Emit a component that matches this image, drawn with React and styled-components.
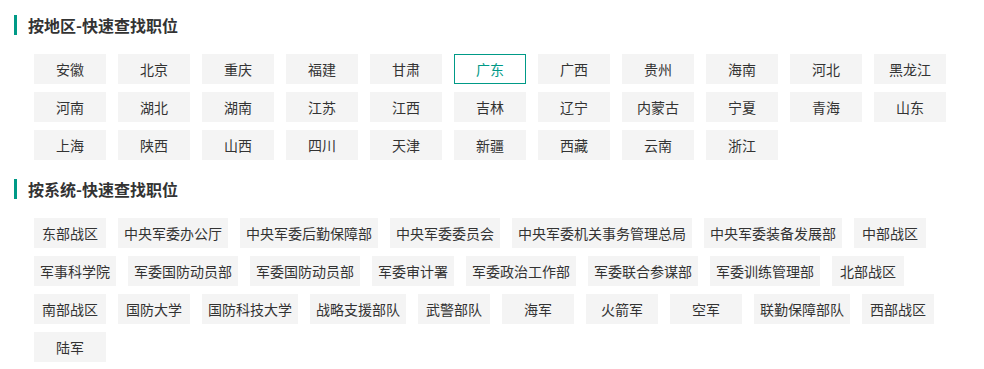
import styled, { createGlobalStyle } from "styled-components";

const GlobalStyle = createGlobalStyle`
  body {
    margin: 0;
    background: #fff;
    font-family: "Microsoft YaHei", "Noto Sans CJK SC", sans-serif;
    color: #333;
  }
`;

const Page = styled.div`
  padding: 15px 0 0 14px;
  width: 970px;
`;

const Heading = styled.h3`
  margin: ${(p) => (p.$first ? "0" : "11px")} 0 19px;
  border-left: 3px solid #009a87;
  padding-left: 11px;
  height: 20px;
  line-height: 20px;
  font-size: 16px;
  font-weight: bold;
  color: #333;
`;

const List = styled.ul`
  list-style: none;
  margin: 0;
  padding: 0 0 0 20px;
  display: flex;
  flex-wrap: wrap;
`;

const Item = styled.li`
  box-sizing: border-box;
  min-width: 72px;
  height: 30px;
  margin: 0 12px 8px 0;
  padding: 0 5px;
  font-size: 14px;
  line-height: 28px;
  text-align: center;
  white-space: nowrap;
  background: ${(p) => (p.$active ? "#fff" : "#f4f4f4")};
  border: 1px solid ${(p) => (p.$active ? "#009a87" : "transparent")};
  color: ${(p) => (p.$active ? "#009a87" : "#333")};
  cursor: pointer;
`;

const regions = [
  "安徽", "北京", "重庆", "福建", "甘肃", "广东", "广西", "贵州", "海南", "河北", "黑龙江",
  "河南", "湖北", "湖南", "江苏", "江西", "吉林", "辽宁", "内蒙古", "宁夏", "青海", "山东",
  "上海", "陕西", "山西", "四川", "天津", "新疆", "西藏", "云南", "浙江",
];

const systems = [
  "东部战区", "中央军委办公厅", "中央军委后勤保障部", "中央军委委员会", "中央军委机关事务管理总局",
  "中央军委装备发展部", "中部战区", "军事科学院", "军委国防动员部", "军委国防动员部", "军委审计署",
  "军委政治工作部", "军委联合参谋部", "军委训练管理部", "北部战区", "南部战区", "国防大学",
  "国防科技大学", "战略支援部队", "武警部队", "海军", "火箭军", "空军", "联勤保障部队", "西部战区", "陆军",
];

export default function App() {
  return (
    <>
      <GlobalStyle />
      <Page>
        <Heading $first>按地区-快速查找职位</Heading>
        <List>
          {regions.map((name) => (
            <Item key={name} $active={name === "广东"}>
              {name}
            </Item>
          ))}
        </List>
        <Heading>按系统-快速查找职位</Heading>
        <List>
          {systems.map((name, i) => (
            <Item key={i}>{name}</Item>
          ))}
        </List>
      </Page>
    </>
  );
}
